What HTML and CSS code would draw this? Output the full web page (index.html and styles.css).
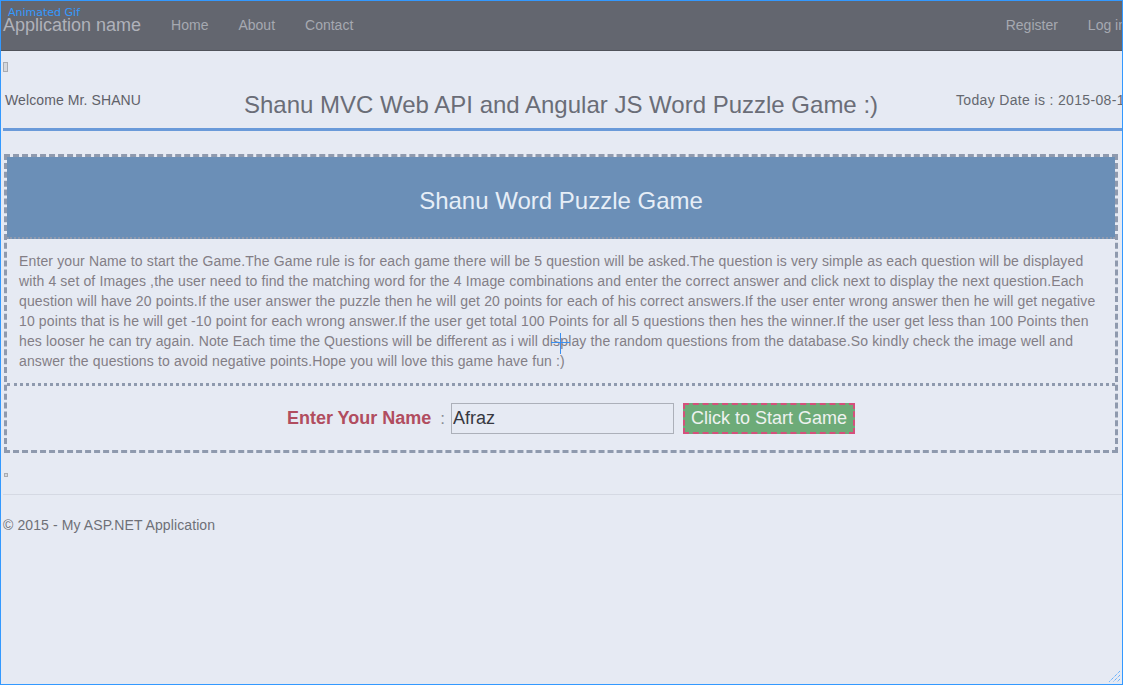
FILE: index.html
```html
<!DOCTYPE html>
<html>
<head>
    <title>Shanu Word Puzzle Game</title>
    <link rel="stylesheet" href="styles.css">
</head>
<body>
<div class="frame">
    <span class="gif-label">Animated Gif</span>

    <div class="navbar">
        <a class="brand" href="#">Application name</a>
        <ul class="nav">
            <li><a href="#">Home</a></li>
            <li><a href="#">About</a></li>
            <li><a href="#">Contact</a></li>
        </ul>
        <ul class="nav nav-right">
            <li><a href="#">Register</a></li>
            <li><a href="#">Log in</a></li>
        </ul>
    </div>

    <div class="body-content">
        <span class="broken-img"></span>

        <div class="title-row">
            <div class="welcome">Welcome Mr. SHANU</div>
            <div class="page-title">Shanu MVC Web API and Angular JS Word Puzzle Game :)</div>
            <div class="today">Today Date is : 2015-08-17</div>
        </div>

        <div class="puzzle">
            <div class="puzzle-head">Shanu Word Puzzle Game</div>
            <div class="rules">
                Enter your Name to start the Game.The Game rule is for each game there will be 5 question will be asked.The question is very simple as each question will be displayed with 4 set of Images ,the user need to find the matching word for the 4 Image combinations and enter the correct answer and click next to display the next question.Each question will have 20 points.If the user answer the puzzle then he will get 20 points for each of his correct answers.If the user enter wrong answer then he will get negative 10 points that is he will get -10 point for each wrong answer.If the user get total 100 Points for all 5 questions then hes the winner.If the user get less than 100 Points then hes looser he can try again. Note Each time the Questions will be different as i will display the random questions from the database.So kindly check the image well and answer the questions to avoid negative points.Hope you will love this game have fun :)
            </div>
            <div class="start-row">
                <label for="player" class="name-label">Enter Your Name</label>
                <span class="colon">:</span>
                <input type="text" id="player" value="Afraz">
                <button class="start-btn">Click to Start Game</button>
            </div>
        </div>

        <span class="broken-img small"></span>
        <hr>
        <footer>&copy; 2015 - My ASP.NET Application</footer>
    </div>

    <!-- mouse cursor caught in the capture -->
    <svg class="cursor" width="20" height="21" viewBox="0 0 20 21">
        <path d="M9.5 0 V21 M0 9.5 H19" stroke="#3a8ff0" stroke-width="1"/>
    </svg>

    <svg class="grip" width="14" height="14" viewBox="0 0 14 14">
        <path d="M13 2 L2 13 M13 6 L6 13 M13 10 L10 13" stroke="#3399ff" stroke-width="1" stroke-dasharray="1 1"/>
    </svg>
</div>
</body>
</html>
```

FILE: styles.css
```css
body {
    margin: 0;
    font-family: "Liberation Sans", Arial, sans-serif;
    background-color: #e6eaf3;
}
.frame {
    position: relative;
    width: 1123px;
    height: 685px;
    box-sizing: border-box;
    border: 1px solid #3399ff;
    overflow: hidden;
    background-color: #e6eaf3;
}
.gif-label {
    position: absolute;
    left: 7px;
    top: 5px;
    font-family: "DejaVu Sans", sans-serif;
    font-size: 11px;
    color: #3399ff;
}

/* top bar */
.navbar {
    display: flex;
    align-items: center;
    width: 1140px;
    height: 49px;
    background-color: #63666f;
    border-bottom: 1px solid #50535a;
}
.brand {
    padding-left: 2px;
    font-size: 18px;
    color: #b0b2ba;
    text-decoration: none;
}
.nav {
    display: flex;
    list-style: none;
    margin: 0 0 0 15px;
    padding: 0;
}
.nav a {
    display: block;
    padding: 0 15px;
    font-size: 14px;
    line-height: 49px;
    color: #a6a9b1;
    text-decoration: none;
}
.nav-right {
    margin-left: auto;
}

/* page */
.body-content {
    padding-left: 2px;
}
.broken-img {
    display: block;
    width: 3px;
    height: 8px;
    margin-top: 11px;
    border: 1px solid #a8abb2;
    background-color: #d4d7dd;
}
.broken-img.small {
    width: 2px;
    height: 2px;
    margin-top: 20px;
    margin-left: 1px;
}
.title-row {
    display: grid;
    grid-template-columns: 163px 1fr 166px;
    align-items: start;
    margin-top: 18px;
    padding-bottom: 8px;
    border-bottom: 3px solid #6a9ad9;
}
.welcome {
    padding-left: 2px;
    font-size: 14px;
    line-height: 20px;
    letter-spacing: 0.1px;
    color: #5f6169;
}
.page-title {
    text-align: center;
    font-size: 24px;
    line-height: 30px;
    color: #6a6d77;
}
.today {
    font-size: 14px;
    line-height: 20px;
    letter-spacing: 0.34px;
    color: #65686f;
    white-space: nowrap;
}

/* game panel */
.puzzle {
    width: 1114px;
    box-sizing: border-box;
    margin: 23px 0 0 1px;
    border: 3px dashed #8f9aae;
}
.puzzle-head {
    padding: 30px 0 22px;
    background-color: #6b8fb7;
    border-bottom: 2px dotted #8f9aae;
    text-align: center;
    font-size: 24px;
    line-height: 28px;
    color: #e6eef7;
}
.rules {
    padding: 12px 12px;
    border-bottom: 3px dotted #8f9aae;
    font-size: 14px;
    line-height: 20px;
    letter-spacing: 0.13px;
    color: #837e86;
}
.start-row {
    display: flex;
    justify-content: center;
    align-items: center;
    padding: 17px 0 16px 20px;
}
.name-label {
    font-size: 18px;
    font-weight: bold;
    color: #b14d5f;
}
.colon {
    margin: 0 6px 0 9px;
    font-size: 17px;
    color: #8a8c92;
}
.start-row input {
    width: 223px;
    height: 31px;
    box-sizing: border-box;
    padding: 0 1px;
    border: 1px solid #acb0b9;
    background-color: #e6eaf3;
    font-family: "Liberation Sans", Arial, sans-serif;
    font-size: 18px;
    color: #363840;
}
.start-btn {
    height: 31px;
    margin-left: 9px;
    padding: 0 6px;
    background-color: #6dab78;
    border: 2px dashed #d5507c;
    font-family: "Liberation Sans", Arial, sans-serif;
    font-size: 18px;
    color: #eef2f0;
}

hr {
    margin: 17px 0 0;
    border: none;
    border-top: 1px solid #d5d9e3;
}
footer {
    margin-top: 20px;
    font-size: 14px;
    line-height: 20px;
    letter-spacing: 0.1px;
    color: #6e7077;
}

.cursor {
    position: absolute;
    left: 550px;
    top: 332px;
}
.grip {
    position: absolute;
    right: 1px;
    bottom: 1px;
}
```
